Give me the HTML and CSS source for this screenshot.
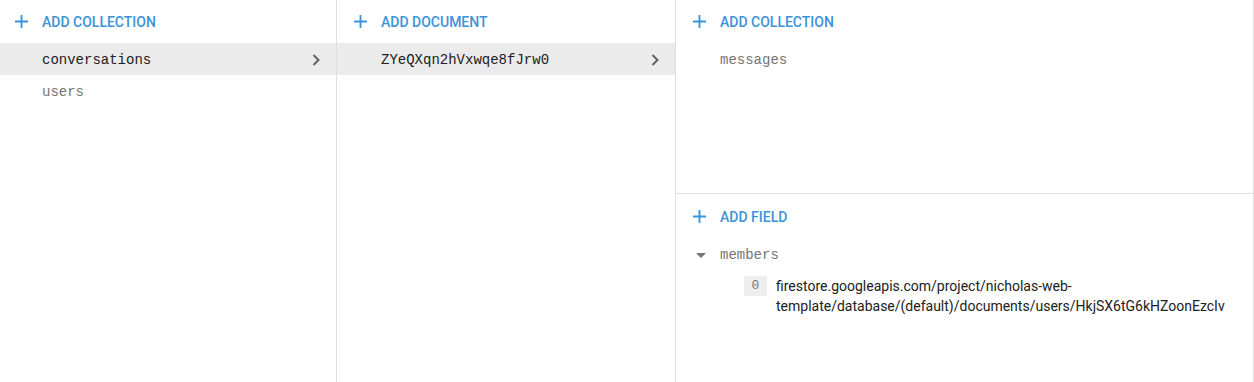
FILE: index.html
```html
<!DOCTYPE html>
<html lang="en">
<head>
    <meta charset="UTF-8">
    <title>Cloud Firestore</title>
    <link rel="stylesheet" href="styles.css">
</head>
<body>
    <div class="panels">
        <!-- Колонка коллекций -->
        <section class="panel panel-root">
            <button class="add-btn">
                <svg class="plus" viewBox="0 0 14 14"><path d="M7 0v14M0 7h14"/></svg>
                ADD COLLECTION
            </button>
            <div class="item selected">
                <span>conversations</span>
                <svg class="chevron" viewBox="0 0 8 12"><path d="M1.5 1l5 5-5 5"/></svg>
            </div>
            <div class="item">users</div>
        </section>

        <!-- Колонка документов -->
        <section class="panel panel-docs">
            <button class="add-btn">
                <svg class="plus" viewBox="0 0 14 14"><path d="M7 0v14M0 7h14"/></svg>
                ADD DOCUMENT
            </button>
            <div class="item selected dark">
                <span>ZYeQXqn2hVxwqe8fJrw0</span>
                <svg class="chevron" viewBox="0 0 8 12"><path d="M1.5 1l5 5-5 5"/></svg>
            </div>
        </section>

        <!-- Документ -->
        <section class="panel panel-doc">
            <div class="subcollections">
                <button class="add-btn">
                    <svg class="plus" viewBox="0 0 14 14"><path d="M7 0v14M0 7h14"/></svg>
                    ADD COLLECTION
                </button>
                <div class="item">messages</div>
            </div>
            <div class="fields">
                <button class="add-btn">
                    <svg class="plus" viewBox="0 0 14 14"><path d="M7 0v14M0 7h14"/></svg>
                    ADD FIELD
                </button>
                <div class="field-name">
                    <svg class="caret" viewBox="0 0 10 5"><path d="M0 0h10L5 5z"/></svg>
                    members
                </div>
                <div class="array-entry">
                    <span class="index">0</span>
                    <span class="value">firestore.googleapis.com/project/nicholas-web-template/database/(default)/documents/users/HkjSX6tG6kHZoonEzcIv</span>
                </div>
            </div>
        </section>
    </div>
</body>
</html>
```

FILE: styles.css
```css
body {
    margin: 0;
    padding: 0;
    background-color: #fff;
    font-family: Roboto, Arial, sans-serif;
    color: #212121;
}
.panels {
    display: flex;
    height: 382px;
}
.panel {
    border-right: 1px solid #e0e0e0;
    box-sizing: border-box;
}
.panel-root {
    width: 337px;
}
.panel-docs {
    width: 339px;
}
.panel-doc {
    width: 578px;
    display: flex;
    flex-direction: column;
}
.add-btn {
    display: flex;
    align-items: center;
    gap: 14px;
    height: 43px;
    padding: 0 0 0 15px;
    margin: 0;
    border: none;
    background: none;
    font-family: Roboto, Arial, sans-serif;
    font-size: 14px;
    font-weight: 500;
    color: #3b93d9;
    cursor: pointer;
}
.panel-docs .add-btn, .panel-doc .add-btn {
    padding-left: 17px;
}
.plus {
    width: 13px;
    height: 13px;
    stroke: #3b93d9;
    stroke-width: 2;
    fill: none;
}
.item {
    display: flex;
    align-items: center;
    justify-content: space-between;
    height: 32px;
    padding: 1px 16px 0 42px;
    box-sizing: border-box;
    font-family: "Liberation Mono", "DejaVu Sans Mono", monospace;
    font-size: 14px;
    color: #757575;
}
.panel-docs .item {
    padding-left: 44px;
}
.panel-doc .item {
    padding-left: 44px;
}
.item.selected {
    background-color: #ebebeb;
    color: #212121;
}
.chevron {
    width: 8px;
    height: 12px;
    stroke: #616161;
    stroke-width: 2;
    fill: none;
}
.subcollections {
    height: 193px;
    border-bottom: 1px solid #e0e0e0;
}
.fields .add-btn {
    height: 45px;
}
.field-name {
    display: flex;
    align-items: center;
    height: 32px;
    padding-left: 20px;
    font-family: "Liberation Mono", "DejaVu Sans Mono", monospace;
    font-size: 14px;
    color: #757575;
}
.caret {
    width: 10px;
    height: 5px;
    fill: #757575;
    margin-right: 14px;
}
.array-entry {
    display: flex;
    align-items: flex-start;
    padding: 5px 20px 0 68px;
}
.index {
    flex: none;
    width: 23px;
    height: 20px;
    line-height: 20px;
    text-align: center;
    background-color: #eeeeee;
    font-family: "Liberation Mono", "DejaVu Sans Mono", monospace;
    font-size: 13px;
    color: #757575;
}
.value {
    margin-left: 9px;
    font-size: 14px;
    line-height: 20px;
    color: #212121;
}
```
